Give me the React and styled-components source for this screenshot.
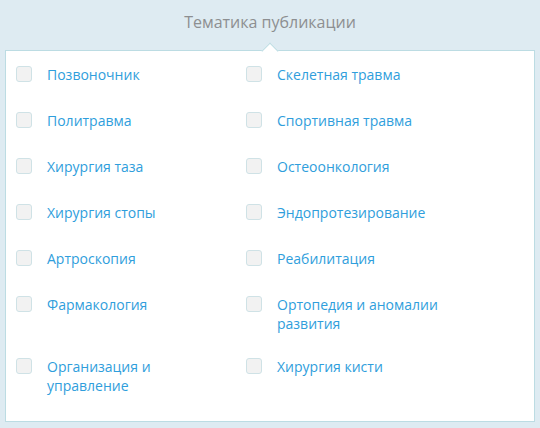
import React from "react";
import styled, { createGlobalStyle } from "styled-components";

const topics = [
  ["Позвоночник", "Скелетная травма"],
  ["Политравма", "Спортивная травма"],
  ["Хирургия таза", "Остеоонкология"],
  ["Хирургия стопы", "Эндопротезирование"],
  ["Артроскопия", "Реабилитация"],
  ["Фармакология", "Ортопедия и аномалии развития"],
  ["Организация и управление", "Хирургия кисти"],
];

const App = () => {
  return (
    <Wrapper>
      <GlobalStyle />
      <Title>Тематика публикации</Title>
      <Panel>
        <Grid>
          {topics.flat().map((name) => (
            <Option key={name}>
              <Box type="checkbox" />
              <Label>{name}</Label>
            </Option>
          ))}
        </Grid>
      </Panel>
    </Wrapper>
  );
};

const GlobalStyle = createGlobalStyle`
  body {
    margin: 0;
    background: #deebf2;
    font-family: "Open Sans", "Noto Sans", sans-serif;
  }
`;

const Wrapper = styled.div`
  width: 540px;
  height: 428px;
  box-sizing: border-box;
  padding: 11px 5px 0 5px;
  background: #deebf2;
`;

const Title = styled.div`
  height: 22px;
  margin-bottom: 17px;
  text-align: center;
  font-size: 16px;
  line-height: 22px;
  color: #8d8f91;
`;

const Panel = styled.div`
  position: relative;
  background: #fff;
  border: 1px solid #bcdce3;
  padding: 14px 10px 26px 10px;
  &::before {
    content: "";
    position: absolute;
    top: -6px;
    left: 50%;
    width: 11px;
    height: 11px;
    margin-left: -6px;
    background: #fff;
    border-top: 1px solid #bcdce3;
    border-left: 1px solid #bcdce3;
    transform: rotate(45deg);
  }
`;

const Grid = styled.div`
  display: grid;
  grid-template-columns: 230px 230px;
  row-gap: 24px;
`;

const Option = styled.label`
  display: flex;
  align-items: flex-start;
  min-height: 22px;
  cursor: pointer;
`;

const Box = styled.input`
  appearance: none;
  flex: none;
  width: 16px;
  height: 16px;
  margin: 1px 15px 0 0;
  box-sizing: border-box;
  border: 1px solid #cfe2e6;
  border-radius: 3px;
  background: #f2f2f2;
`;

const Label = styled.span`
  max-width: 182px;
  font-size: 14px;
  line-height: 19px;
  color: #2f9edc;
`;

export default App;
